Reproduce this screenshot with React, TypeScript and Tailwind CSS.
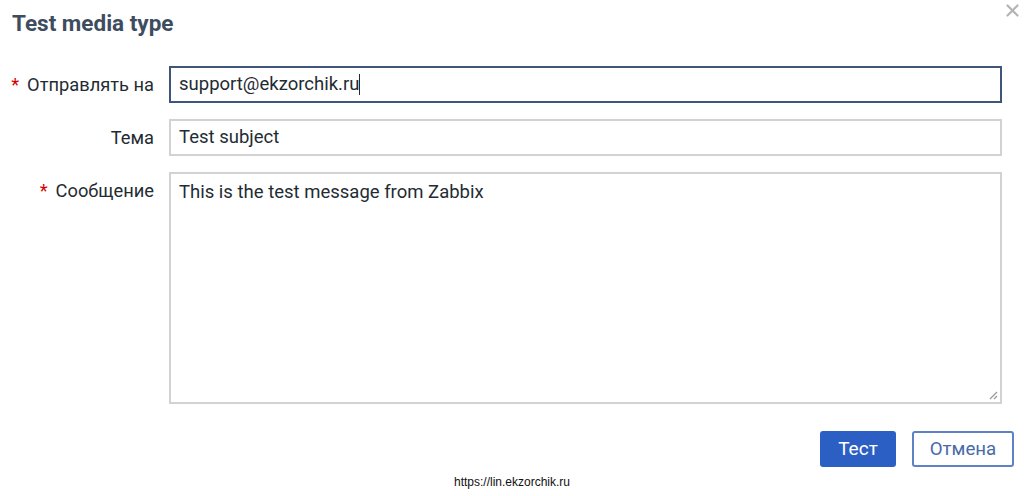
import React from "react";

export default function App() {
  const font = { fontFamily: "Roboto, 'Noto Sans', Arial, sans-serif" };
  return (
    <div className="relative w-[1024px] h-[496px] bg-white overflow-hidden" style={font}>
      <button className="absolute right-[4px] top-[2px] w-[16px] h-[16px] flex items-center justify-center text-[#b4b4b4]">
        <svg width="13" height="13" viewBox="0 0 13 13">
          <path d="M1.5 1.5 L11.5 11.5 M11.5 1.5 L1.5 11.5" stroke="currentColor" strokeWidth="2.2" strokeLinecap="round" />
        </svg>
      </button>
      <div className="pt-[9px] pl-[12px]">
        <h1 className="text-[22.5px] leading-[28px] font-bold text-[#3d4d5f]">Test media type</h1>
      </div>
      <div className="mt-[29px] flex flex-col gap-[16px]">
        <div className="flex items-center">
          <div className="w-[155px] text-right pr-[1px] text-[18.3px] text-[#1f2c33]">
            <span className="text-[#d40000] mr-[8px]">*</span>Отправлять на
          </div>
          <div className="ml-[14px] w-[833px] h-[37px] border-2 border-[#3f5579] flex items-center px-[8px] text-[18.5px] text-[#1f2c33]">
            support@ekzorchik.ru<span className="inline-block w-[1px] h-[21px] bg-[#1f2c33]" />
          </div>
        </div>
        <div className="flex items-center">
          <div className="w-[155px] text-right pr-[1px] text-[18.3px] text-[#1f2c33]">Тема</div>
          <div className="ml-[14px] w-[833px] h-[37px] border-2 border-[#d2d2d2] flex items-center px-[8px] text-[18.5px] text-[#1f2c33]">
            Test subject
          </div>
        </div>
        <div className="flex items-start">
          <div className="w-[155px] text-right pr-[1px] pt-[5px] text-[18.3px] text-[#1f2c33]">
            <span className="text-[#d40000] mr-[8px]">*</span>Сообщение
          </div>
          <div className="relative ml-[14px] w-[833px] h-[232px] border-2 border-[#d2d2d2] px-[8px] pt-[5px] text-[18.5px] text-[#1f2c33]">
            This is the test message from Zabbix
            <svg className="absolute right-[2px] bottom-[2px]" width="11" height="11" viewBox="0 0 11 11">
              <path d="M10 3 L3 10 M10 7 L7 10" stroke="#9a9a9a" strokeWidth="1.3" />
            </svg>
          </div>
        </div>
      </div>
      <div className="mt-[27px] flex justify-end gap-[16px] pr-[10px]">
        <button className="w-[76px] h-[36px] rounded-[3px] bg-[#2c5fc3] text-white text-[19px]">Тест</button>
        <button className="w-[102px] h-[36px] rounded-[3px] border-2 border-[#5e82c6] bg-white text-[#4a6aa8] text-[18.7px]">Отмена</button>
      </div>
      <div className="mt-[8px] text-center text-[12px] leading-[14px] text-[#111]" style={{ fontFamily: "'Liberation Sans', Arial, sans-serif" }}>
        https://lin.ekzorchik.ru
      </div>
    </div>
  );
}
